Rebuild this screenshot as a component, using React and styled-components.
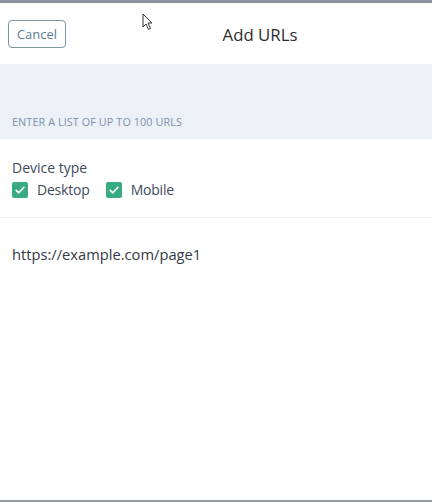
import React from "react";
import styled, { createGlobalStyle } from "styled-components";

const Global = createGlobalStyle`
  html, body { margin: 0; padding: 0; height: 100%; background: #fff; }
  #root { height: 100%; }
  * { box-sizing: border-box; }
`;

const Frame = styled.div`
  height: 100vh;
  display: flex;
  flex-direction: column;
  border-top: 3px solid #8c949e;
  border-bottom: 2px solid #959ca5;
  font-family: "Open Sans", "Noto Sans", sans-serif;
  background: #fff;
  position: relative;
`;

const Header = styled.header`
  height: 61px;
  display: flex;
  align-items: center;
  padding: 0 8px;
`;

const CancelButton = styled.button`
  height: 28px;
  width: 58px;
  margin-top: 1px;
  border: 1px solid #7d94a3;
  border-radius: 4px;
  background: #fff;
  color: #5f7d90;
  font-family: inherit;
  font-size: 13px;
  padding: 0;
`;

const Title = styled.h1`
  flex: 1;
  margin: 1px 0 0;
  padding-left: 30px;
  text-align: center;
  font-size: 16.8px;
  font-weight: 500;
  color: #2d2d2d;
`;

const Band = styled.div`
  height: 75px;
  background: #ecf1f8;
  display: flex;
  align-items: flex-end;
  padding: 0 12px 10px;
`;

const BandLabel = styled.span`
  font-size: 10.8px;
  color: #7d90a8;
  letter-spacing: 0.1px;
`;

const DeviceSection = styled.section`
  padding: 19px 12px 0;
  height: 79px;
  border-bottom: 1px solid #f0f2f8;
`;

const SectionTitle = styled.div`
  font-size: 14px;
  color: #3f4a5a;
  line-height: 19px;
`;

const CheckRow = styled.div`
  display: flex;
  gap: 16px;
  margin-top: 3px;
`;

const CheckItem = styled.label`
  display: flex;
  align-items: center;
  gap: 9px;
  font-size: 14px;
  letter-spacing: -0.2px;
  color: #3f4a5a;
  line-height: 19px;
`;

const Box = styled.span`
  width: 16px;
  height: 16px;
  border-radius: 2px;
  background: #38ab80;
  display: inline-flex;
  align-items: center;
  justify-content: center;
`;

const UrlArea = styled.div`
  flex: 1;
  padding: 26px 12px;
  font-size: 14.7px;
  color: #333a44;
`;

const Cursor = styled.svg`
  position: absolute;
  left: 142px;
  top: 10px;
`;

function Check({ label }) {
  return (
    <CheckItem>
      <Box>
        <svg width="12" height="12" viewBox="0 0 12 12">
          <path d="M2.2 6.3 L4.8 8.8 L9.8 3.4" fill="none" stroke="#fff" strokeWidth="1.6" strokeLinecap="round" strokeLinejoin="round" />
        </svg>
      </Box>
      {label}
    </CheckItem>
  );
}

export default function App() {
  return (
    <>
      <Global />
      <Frame>
        <Header>
          <CancelButton>Cancel</CancelButton>
          <Title>Add URLs</Title>
        </Header>
        <Band>
          <BandLabel>ENTER A LIST OF UP TO 100 URLS</BandLabel>
        </Band>
        <DeviceSection>
          <SectionTitle>Device type</SectionTitle>
          <CheckRow>
            <Check label="Desktop" />
            <Check label="Mobile" />
          </CheckRow>
        </DeviceSection>
        <UrlArea>https://example.com/page1</UrlArea>
        <Cursor width="12" height="18" viewBox="0 0 12 18">
          <path d="M1 1 L1 14 L4 11 L6.5 16.5 L8.5 15.5 L6 10 L10 10 Z" fill="#fff" stroke="#333" strokeWidth="1" strokeLinejoin="round" />
        </Cursor>
      </Frame>
    </>
  );
}
